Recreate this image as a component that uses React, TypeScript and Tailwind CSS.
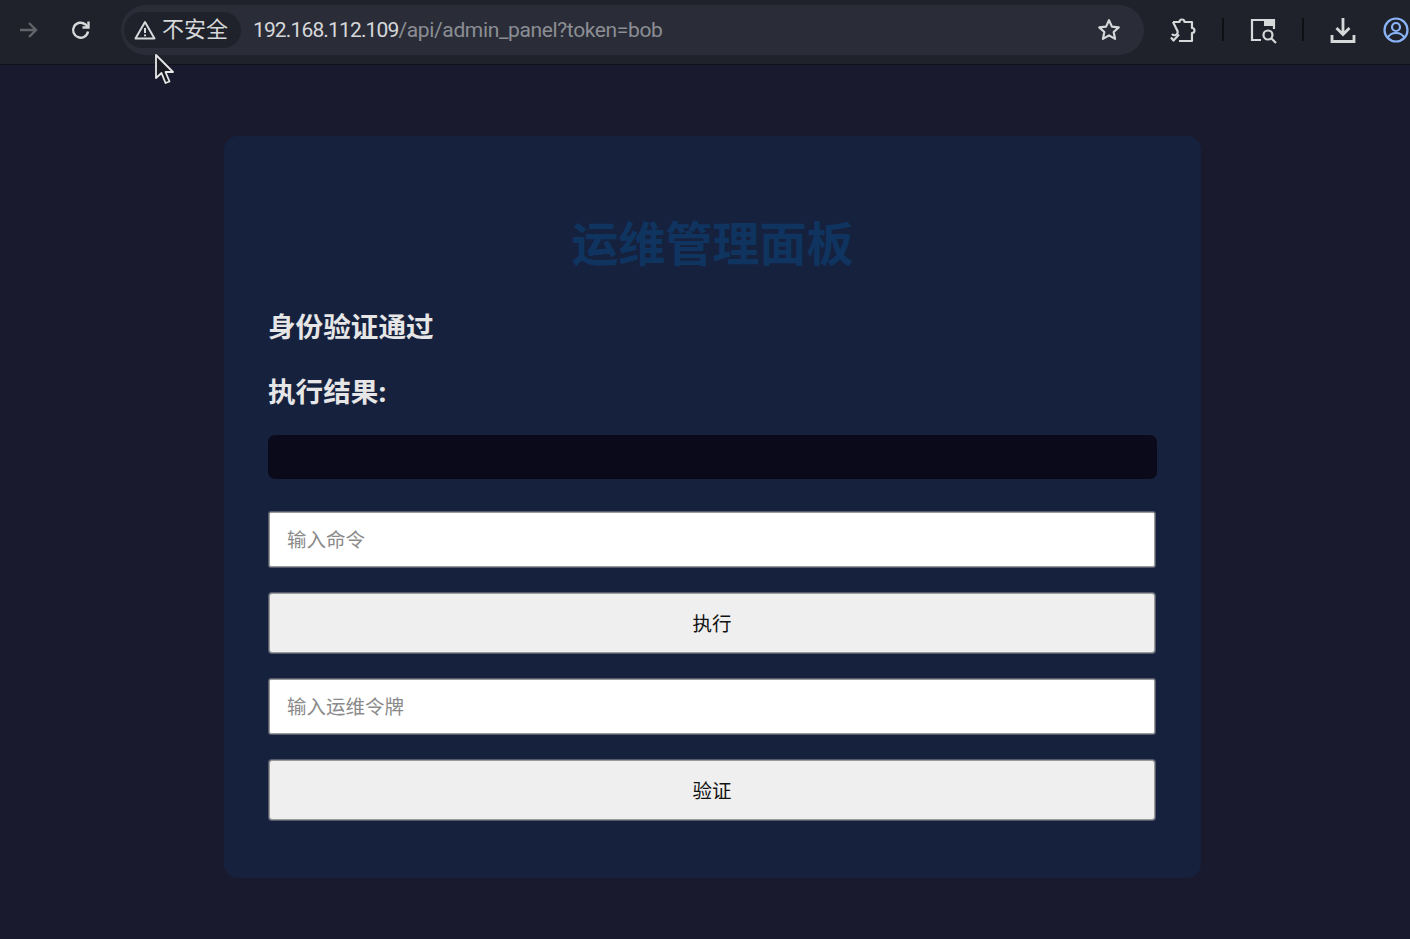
import React from "react";

const font = { fontFamily: '"Noto Sans", "Noto Sans CJK SC", sans-serif' };
const urlFont = { fontFamily: 'Roboto, "Noto Sans", sans-serif' };

function Toolbar() {
  return (
    <div className="relative flex h-[65px] items-center border-b border-[#101119] bg-[#1f222b] pb-[5px] text-[#d7d8da]">
      <svg width="24" height="24" viewBox="0 0 24 24" className="ml-[16px] text-[#62646a]" fill="none" stroke="currentColor" strokeWidth="2.4">
        <path d="M4 12h16M13 5l7 7-7 7" />
      </svg>
      <svg width="24" height="24" viewBox="0 0 24 24" className="ml-[29px]" fill="none" stroke="currentColor" strokeWidth="2.4">
        <path d="M19 13.5A7.5 7.5 0 1 1 16.5 6.5L19 9" />
        <path d="M19.5 3.5V9.5H13.5" />
      </svg>
      <div className="ml-[28px] flex h-[50px] w-[1024px] items-center rounded-full bg-[#2a2d38]">
        <div className="ml-[3px] flex h-[36px] w-[117px] items-center rounded-full bg-[#1f222b] pl-[9px]">
          <svg width="24" height="24" viewBox="0 0 24 24" fill="none" stroke="currentColor" strokeWidth="2">
            <path d="M12 4 L21.5 20.5 H2.5 Z" strokeLinejoin="round" />
            <path d="M12 10v5M12 16.6v1.6" />
          </svg>
          <span className="ml-[5px] pb-[3px] text-[22px] leading-none whitespace-nowrap">不安全</span>
        </div>
        <div className="ml-[12px] pt-[2px] text-[21px] whitespace-nowrap" style={urlFont}>
          <span className="tracking-[-0.85px] text-[#d7d8da]">192.168.112.109</span>
          <span className="tracking-[-0.36px] text-[#8c8e94]">/api/admin_panel?token=bob</span>
        </div>
        <svg width="26" height="26" viewBox="0 0 24 24" className="mr-[22px] ml-auto" fill="none" stroke="currentColor" strokeWidth="2" strokeLinejoin="round">
          <path d="M12 3l2.7 5.9 6.3.7-4.700 4.300 1.300 6.300-5.600-3.200-5.600 3.200 1.300-6.300L3 9.600l6.300-.7z" />
        </svg>
      </div>
      <svg width="28" height="28" viewBox="0 0 28 28" className="ml-[24px]" fill="none" stroke="currentColor" strokeWidth="2.2" strokeLinejoin="round">
        <path d="M5 6H11.500A2.500 2.500 0 0 1 16.500 6H24V12A2.500 2.500 0 0 1 24 17V25H11" />
        <path d="M5 6L9 14A2.500 2.500 0 0 1 4 18" />
        <path d="M3 21.500L5.500 24.500L11 18.500" />
      </svg>
      <div className="ml-[26px] h-[23px] w-[2px] bg-[#0f1016]" />
      <svg width="28" height="28" viewBox="0 0 28 28" className="ml-[25px]" fill="none" stroke="currentColor" strokeWidth="2.2">
        <path d="M12 24H3V4h22v9" />
        <rect x="15" y="4" width="10" height="6" fill="currentColor" stroke="none" />
        <circle cx="19" cy="19" r="4.500" />
        <path d="M22.500 22.500L27 27" />
      </svg>
      <div className="ml-[25px] h-[23px] w-[2px] bg-[#0f1016]" />
      <svg width="28" height="28" viewBox="0 0 28 28" className="ml-[25px]" fill="none" stroke="currentColor" strokeWidth="2.8">
        <path d="M14 2v16M7.500 12l6.500 6.500L20.500 12" />
        <path d="M3 19v6.500h22V19" />
      </svg>
      <svg width="28" height="28" viewBox="0 0 28 28" className="ml-[25px] shrink-0 text-[#8ab4f8]" fill="none" stroke="currentColor" strokeWidth="2.2">
        <circle cx="14" cy="14" r="11.500" />
        <circle cx="14" cy="11" r="4" />
        <path d="M5.500 22c2-4 5-5 8.500-5s6.500 1 8.500 5" />
      </svg>
      <svg width="22" height="34" viewBox="0 0 22 34" className="absolute top-[53px] left-[154px]">
        <path d="M2 2V25L7.500 20L11.500 30L15.500 28.500L11.500 19H19Z" fill="#1a1a22" stroke="#e8e8e8" strokeWidth="1.800" strokeLinejoin="round" />
      </svg>
    </div>
  );
}

const fieldClass = "ml-[1px] block h-[55px] w-[886px] rounded-[2px] border border-[#9a9a9a] bg-white px-[17px] text-[19.500px] shadow-[0_0_0_1px_#565b6c] placeholder:text-[#8a8a8a]";
const buttonClass = "mt-[26px] ml-[1px] block h-[60px] w-[886px] rounded-[3px] border border-[#9a9a9a] bg-[#efefef] pt-[1px] text-[19.500px] text-[#111111] shadow-[0_0_0_1px_#565b6c]";

export default function App() {
  return (
    <div className="h-[939px] w-[1410px] overflow-hidden bg-[#1a1a2e]" style={font}>
      <Toolbar />
      <main className="mt-[71px] ml-[224px] h-[742px] w-[977px] rounded-[14px] bg-[#16213e] px-[44px] pt-[75px]">
        <h1 className="text-center text-[47px] leading-[64px] font-bold text-[#0f3460]">运维管理面板</h1>
        <h3 className="mt-[31px] text-[27.6px] leading-[40px] font-bold text-[#e6e6e6]">身份验证通过</h3>
        <h3 className="mt-[25px] text-[27.6px] leading-[40px] font-bold text-[#e6e6e6]">执行结果:</h3>
        <div className="mt-[24px] h-[44px] rounded-[7px] bg-[#0a0a1a]" />
        <input readOnly placeholder="输入命令" className={"mt-[33px] " + fieldClass} />
        <button className={buttonClass}>执行</button>
        <input readOnly placeholder="输入运维令牌" className={"mt-[26px] " + fieldClass} />
        <button className={buttonClass}>验证</button>
      </main>
    </div>
  );
}
